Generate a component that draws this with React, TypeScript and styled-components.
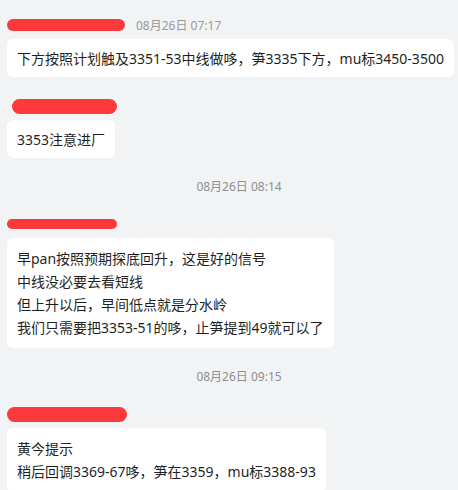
import React from "react";
import styled, { createGlobalStyle } from "styled-components";

const GlobalStyle = createGlobalStyle`
  html, body {
    margin: 0;
    padding: 0;
    background: #f2f3f5;
  }
  body {
    font-family: "Noto Sans", "Noto Sans CJK SC", sans-serif;
    color: #1f1f1f;
  }
`;

const Page = styled.div`
  display: flex;
  flex-direction: column;
  gap: 19px;
  padding: 15px 3px 0 7px;
  height: 490px;
  box-sizing: border-box;
  overflow: hidden;
  background: #f2f3f5;
`;

const Message = styled.div`
  display: flex;
  flex-direction: column;
  align-items: flex-start;
  gap: 4px;
`;

const Header = styled.div`
  display: flex;
  align-items: center;
  gap: 11px;
  height: 20px;
`;

const NameMask = styled.div<{ $w: number; $h: number; $ml?: number }>`
  width: ${(p) => p.$w}px;
  height: ${(p) => p.$h}px;
  margin-left: ${(p) => p.$ml ?? 0}px;
  border-radius: 999px;
  background: #fd3a3b;
`;

const Time = styled.span`
  font-size: 12px;
  color: #9a9a9a;
  white-space: nowrap;
`;

const Bubble = styled.div<{ $multi?: boolean }>`
  background: #ffffff;
  border-radius: 6px;
  padding: ${(p) => (p.$multi ? "9px 10px" : "7.5px 10px")};
  font-size: 14px;
  line-height: 23px;
  color: #1f1f1f;
`;

const Line = styled.div`
  white-space: nowrap;
`;

const Divider = styled.div`
  display: flex;
  justify-content: center;
  align-items: center;
  height: 18px;
  padding-left: 16px;
  font-size: 12px;
  color: #8f8f8f;
`;

type Msg = {
  kind: "msg";
  mask: { w: number; h: number; ml?: number };
  time?: string;
  lines: string[];
};
type Sep = { kind: "sep"; time: string };

const items: (Msg | Sep)[] = [
  {
    kind: "msg",
    mask: { w: 118, h: 12 },
    time: "08月26日 07:17",
    lines: ["下方按照计划触及3351-53中线做哆，笋3335下方，mu标3450-3500"],
  },
  {
    kind: "msg",
    mask: { w: 105, h: 15, ml: 5 },
    lines: ["3353注意进厂"],
  },
  { kind: "sep", time: "08月26日 08:14" },
  {
    kind: "msg",
    mask: { w: 110, h: 10 },
    lines: [
      "早pan按照预期探底回升，这是好的信号",
      "中线没必要去看短线",
      "但上升以后，早间低点就是分水岭",
      "我们只需要把3353-51的哆，止笋提到49就可以了",
    ],
  },
  { kind: "sep", time: "08月26日 09:15" },
  {
    kind: "msg",
    mask: { w: 120, h: 15 },
    lines: ["黄今提示", "稍后回调3369-67哆，笋在3359，mu标3388-93"],
  },
];

export default function App() {
  return (
    <>
      <GlobalStyle />
      <Page>
        {items.map((it, i) =>
          it.kind === "sep" ? (
            <Divider key={i}>{it.time}</Divider>
          ) : (
            <Message key={i}>
              <Header>
                <NameMask $w={it.mask.w} $h={it.mask.h} $ml={it.mask.ml} />
                {it.time && <Time>{it.time}</Time>}
              </Header>
              <Bubble $multi={it.lines.length > 1}>
                {it.lines.map((l, j) => (
                  <Line key={j}>{l}</Line>
                ))}
              </Bubble>
            </Message>
          )
        )}
      </Page>
    </>
  );
}
